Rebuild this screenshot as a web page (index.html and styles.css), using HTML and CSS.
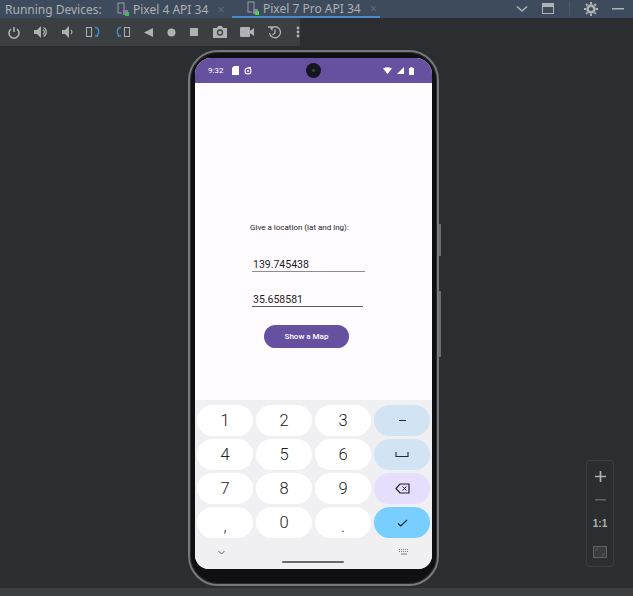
FILE: index.html
```html
<!DOCTYPE html>
<html lang="en-US">

<head>
    <meta charset="UTF-8">
    <meta name="viewport" content="width=device-width">
    <title>Running Devices</title>
    <link rel="stylesheet" href="styles.css">
</head>

<body>
    <div class="tabbar">
        <span class="tabbar-title">Running Devices:</span>
        <div class="tab tab-first">
            <svg width="13" height="14" viewBox="0 0 13 14"><rect x="1" y="1" width="6" height="10" fill="none" stroke="#9aa0a6"/><rect x="5" y="8" width="6" height="5" fill="#3d4b5c"/><rect x="6" y="8" width="5" height="5" fill="#9c6fb0"/><rect x="8" y="10" width="4" height="4" fill="#3fc04a"/></svg>
            <span>Pixel 4 API 34</span>
            <i class="tab-x">×</i>
        </div>
        <div class="tab tab-active">
            <svg width="13" height="14" viewBox="0 0 13 14"><rect x="1" y="1" width="6" height="10" fill="none" stroke="#9aa0a6"/><rect x="5" y="8" width="6" height="5" fill="#3d4b5c"/><rect x="6" y="8" width="5" height="5" fill="#9c6fb0"/><rect x="8" y="10" width="4" height="4" fill="#3fdc4a"/></svg>
            <span>Pixel 7 Pro API 34</span>
            <i class="tab-x">×</i>
        </div>
        <div class="tabbar-right">
            <svg width="12" height="8" viewBox="0 0 12 8"><path d="M1 1.5l5 4.5 5-4.5" fill="none" stroke="#afb1b3" stroke-width="1.5"/></svg>
            <svg width="13" height="12" viewBox="0 0 13 12"><rect x=".5" y=".5" width="11" height="10" fill="none" stroke="#afb1b3"/><rect x="1" y="1" width="10" height="3" fill="#afb1b3"/></svg>
            <b class="sep"></b>
            <svg width="14" height="14" viewBox="0 0 14 14"><circle cx="7" cy="7" r="3.4" fill="none" stroke="#afb1b3" stroke-width="2.6"/><path d="M7 0v14M0 7h14M2 2l10 10M12 2L2 12" stroke="#afb1b3" stroke-width="2" stroke-dasharray="2.2 9.6"/></svg>
            <svg width="12" height="4" viewBox="0 0 12 4"><rect y="1" width="12" height="1.5" fill="#afb1b3"/></svg>
        </div>
    </div>

    <div class="toolbar">
        <svg class="tool" width="12" height="13" viewBox="0 0 12 13"><path d="M3 3.2a5 5 0 1 0 6 0" fill="none" stroke="#afb1b3" stroke-width="1.6"/><path d="M6 1v5" stroke="#afb1b3" stroke-width="1.6"/></svg>
        <svg class="tool" width="14" height="12" viewBox="0 0 14 12"><path d="M0 4h3l4-4v12l-4-4H0z" fill="#afb1b3"/><path d="M9 3.500a3 3 0 0 1 0 5M9.500 1.500a5 5 0 0 1 0 9" fill="none" stroke="#afb1b3" stroke-width="1.200"/></svg>
        <svg class="tool" width="11" height="12" viewBox="0 0 11 12"><path d="M0 4h3l4-4v12l-4-4H0z" fill="#afb1b3"/><path d="M9 4a3 3 0 0 1 0 4" fill="none" stroke="#afb1b3" stroke-width="1.200"/></svg>
        <svg class="tool" width="15" height="12" viewBox="0 0 15 12"><rect x=".5" y="1.500" width="5" height="9" fill="none" stroke="#afb1b3"/><path d="M9 1.500c4 0 5 5 2 8.500M9 10l2.500.2.300-2.700" fill="none" stroke="#3d8fc9" stroke-width="1.400"/></svg>
        <svg class="tool" width="15" height="12" viewBox="0 0 15 12"><rect x="9.500" y="1.500" width="5" height="9" fill="none" stroke="#afb1b3"/><path d="M6 1.500C2 1.500 1 6.500 4 10M6 10l-2.500.2-.3-2.700" fill="none" stroke="#3d8fc9" stroke-width="1.400"/></svg>
        <svg class="tool" width="9" height="9" viewBox="0 0 9 9"><path d="M0 4.500L9 0v9z" fill="#afb1b3"/></svg>
        <svg class="tool" width="9" height="9" viewBox="0 0 9 9"><circle cx="4.500" cy="4.500" r="4" fill="#afb1b3"/></svg>
        <svg class="tool" width="9" height="9" viewBox="0 0 9 9"><rect width="8" height="8" fill="#afb1b3"/></svg>
        <svg class="tool" width="14" height="12" viewBox="0 0 14 12"><path d="M0 2h4l1-2h4l1 2h4v10H0z" fill="#afb1b3"/><circle cx="7" cy="6.500" r="2.500" fill="none" stroke="#3c3f41" stroke-width="1.300"/></svg>
        <svg class="tool" width="14" height="10" viewBox="0 0 14 10"><rect width="10" height="10" rx="1" fill="#afb1b3"/><path d="M10 4l4-3v8l-4-3z" fill="#afb1b3"/></svg>
        <svg class="tool" width="14" height="13" viewBox="0 0 14 13"><path d="M2.500 3a5.500 5.500 0 1 1-1 4" fill="none" stroke="#afb1b3" stroke-width="1.300"/><path d="M0 1h4v3.500" fill="none" stroke="#afb1b3" stroke-width="1.300"/><path d="M7 3.500v3.500l-2.500 2" fill="none" stroke="#afb1b3" stroke-width="1.300"/></svg>
        <svg class="tool" width="4" height="12" viewBox="0 0 4 12"><circle cx="2" cy="2" r="1.400" fill="#afb1b3"/><circle cx="2" cy="6" r="1.400" fill="#afb1b3"/><circle cx="2" cy="10" r="1.400" fill="#afb1b3"/></svg>
    </div>

    <div class="stage">
        <div class="phone">
            <span class="side-btn side-btn-top"></span>
            <span class="side-btn side-btn-low"></span>
            <div class="screen">
                <div class="statusbar">
                    <span class="clock">9:32</span>
                    <svg width="7" height="9" viewBox="0 0 7 9"><path d="M2 0h5v9H0V2z" fill="#fff"/></svg>
                    <svg width="8" height="8" viewBox="0 0 8 8"><circle cx="4" cy="4" r="3" fill="none" stroke="#fff" stroke-width="1.100"/><circle cx="4" cy="4" r="1" fill="#fff"/><path d="M3 0h4v2z" fill="#fff"/></svg>
                    <span class="status-gap"></span>
                    <svg width="9" height="7" viewBox="0 0 9 7"><path d="M0 1.500Q4.500-1 9 1.500L4.500 7z" fill="#fff"/></svg>
                    <svg width="7" height="7" viewBox="0 0 7 7"><path d="M7 0v7H0z" fill="#fff"/></svg>
                    <svg class="batt" width="5" height="8" viewBox="0 0 5 8"><path d="M1.500 0h2v1H5v7H0V1h1.500z" fill="#fff"/></svg>
                    <div class="camera"><i></i></div>
                </div>

                <div class="app">
                    <p class="prompt">Give a location (lat and lng):</p>
                    <div class="field field-lat">139.745438</div>
                    <div class="field field-lng">35.658581</div>
                    <div class="map-btn">Show a Map</div>
                </div>

                <div class="keyboard">
                    <div class="keys">
                        <div class="key">1</div>
                        <div class="key">2</div>
                        <div class="key">3</div>
                        <div class="key key-blue"><b class="dash"></b></div>
                        <div class="key">4</div>
                        <div class="key">5</div>
                        <div class="key">6</div>
                        <div class="key key-blue">
                            <svg width="14" height="6" viewBox="0 0 14 6"><path d="M1 0v4.500h12V0" fill="none" stroke="#1f2a33" stroke-width="1.100"/></svg>
                        </div>
                        <div class="key">7</div>
                        <div class="key">8</div>
                        <div class="key">9</div>
                        <div class="key key-purple">
                            <svg width="15" height="11" viewBox="0 0 15 11"><path d="M5 1h9v9H5L1 5.500z" fill="none" stroke="#1f1d29" stroke-width="1.200"/><path d="M7.500 3.500l4 4M11.500 3.500l-4 4" stroke="#1f1d29"/></svg>
                        </div>
                        <div class="key key-low">,</div>
                        <div class="key">0</div>
                        <div class="key key-low">.</div>
                        <div class="key key-go">
                            <svg width="11" height="8" viewBox="0 0 11 8"><path d="M1 4.500L3.800 7 10 1" fill="none" stroke="#10202a" stroke-width="1.100"/></svg>
                        </div>
                    </div>
                    <div class="kb-foot">
                        <svg width="7" height="5" viewBox="0 0 7 5"><path d="M.5 1l3 3 3-3" fill="none" stroke="#5f6065"/></svg>
                        <svg width="10" height="6" viewBox="0 0 10 6"><path d="M0 .5h10M0 2.500h10" stroke="#77787c" stroke-dasharray="1 1"/><path d="M2 5h6" stroke="#77787c"/></svg>
                    </div>
                    <div class="home-bar"></div>
                </div>
            </div>
        </div>

        <div class="zoom-panel">
            <svg width="11" height="11" viewBox="0 0 11 11"><path d="M5.500 0v11M0 5.500h11" stroke="#afb1b3" stroke-width="1.700"/></svg>
            <svg width="11" height="2" viewBox="0 0 11 2"><rect width="11" height="1.600" fill="#5f6163"/></svg>
            <span class="zoom-one">1:1</span>
            <svg width="14" height="12" viewBox="0 0 14 12"><rect x=".5" y=".5" width="13" height="11" fill="#3a3b3d" stroke="#5f6163"/><path d="M3 5V3h2M9 9h2V7" fill="none" stroke="#5f6163"/></svg>
        </div>
    </div>

    <div class="bottombar"></div>
</body>

</html>
```

FILE: styles.css
```css
html, body {
    margin: 0;
    height: 596px;
    overflow: hidden;
}

body {
    display: flex;
    flex-direction: column;
    background-color: #2b2d30;
    font-family: "Noto Sans", sans-serif;
}

.tabbar {
    display: flex;
    align-items: center;
    height: 18px;
    flex: none;
    background-color: #3d4b5c;
    color: #afb1b3;
    font-size: 12px;
    padding-left: 5px;
}

.tabbar-title {
    width: 112px;
    white-space: nowrap;
}

.tab {
    display: flex;
    align-items: center;
    gap: 3px;
    height: 18px;
    box-sizing: border-box;
    white-space: nowrap;
}

.tab-first {
    width: 115px;
}

.tab-active {
    width: 148px;
    padding-left: 15px;
    border-bottom: 2px solid #4a88c7;
}

.tab-x {
    margin-left: 6px;
    color: #636a70;
    font-style: normal;
    font-size: 13px;
}

.tabbar-right {
    display: flex;
    align-items: center;
    gap: 14px;
    margin-left: auto;
    padding-right: 9px;
}

.sep {
    width: 1px;
    height: 14px;
    background-color: #50596a;
}

.toolbar {
    display: flex;
    align-items: center;
    justify-content: space-between;
    width: 292px;
    height: 28px;
    flex: none;
    padding-left: 8px;
}

.toolbar {
    box-shadow: 633px 0 0 0 #3c3f41;
    background-color: #3c3f41;
}

.stage {
    position: relative;
    flex: 1;
    padding: 4px 0 0 188px;
}

.phone {
    position: relative;
    box-sizing: border-box;
    width: 251px;
    height: 536px;
    padding: 8px 7px 13px;
    background-color: #101012;
    border: 2px solid #77797c;
    border-radius: 30px;
    box-shadow: inset 0 0 0 1px #2c2c2e;
    box-sizing: border-box;
}

.side-btn {
    position: absolute;
    right: -4px;
    width: 2px;
    background-color: #6c6e70;
}

.side-btn-top {
    top: 172px;
    height: 32px;
}

.side-btn-low {
    top: 239px;
    height: 66px;
}

.screen {
    display: flex;
    flex-direction: column;
    height: 100%;
    margin: -2px -2px -2px;
    background-color: #fffbfe;
    border-radius: 16px 16px 14px 14px;
    overflow: hidden;
}

.statusbar {
    position: relative;
    display: flex;
    align-items: center;
    gap: 6px;
    height: 25px;
    flex: none;
    padding: 0 18px 0 13px;
    background-color: #65519f;
    color: #fff;
}

.clock {
    font-family: Roboto, sans-serif;
    font-size: 8px;
    margin-right: 3px;
}

.status-gap {
    flex: 1;
}

.statusbar svg + svg {
    margin-left: -1px;
}

.batt {
    margin-left: 2px;
}

.camera {
    position: absolute;
    left: 111px;
    top: 5px;
    width: 15px;
    height: 15px;
    border-radius: 50%;
    background-color: #17151d;
    display: flex;
    align-items: center;
    justify-content: center;
}

.camera i {
    width: 3px;
    height: 3px;
    border-radius: 50%;
    background-color: #2b4a5e;
}

.app {
    flex: 1;
    font-family: Roboto, sans-serif;
    color: #1c1b1f;
}

.prompt {
    margin: 140px 0 0 55px;
    font-size: 8px;
    line-height: 9px;
    white-space: nowrap;
}

.field {
    margin-left: 57px;
    font-size: 10.5px;
    line-height: 12px;
    padding-left: 1px;
    box-sizing: border-box;
}

.field-lat {
    width: 113px;
    margin-top: 27px;
    border-bottom: 1px solid #8f8b96;
}

.field-lng {
    width: 111px;
    margin-top: 22px;
    border-bottom: 1px solid #5c5a62;
}

.map-btn {
    display: flex;
    align-items: center;
    justify-content: center;
    width: 85px;
    height: 23px;
    margin: 18px 0 0 69px;
    border-radius: 12px;
    background-color: #65519f;
    color: #fff;
    font-size: 8px;
    font-weight: 500;
}

.keyboard {
    position: relative;
    flex: none;
    height: 169px;
    box-sizing: border-box;
    padding: 5px 3px 0 2px;
    background-color: #f0eff2;
}

.keys {
    display: grid;
    grid-template-columns: repeat(4, 56px);
    grid-auto-rows: 31px;
    gap: 3px 3px;
    font-family: Roboto, sans-serif;
    font-size: 16.500px;
    font-weight: 300;
    color: #202124;
}

.key {
    display: flex;
    align-items: center;
    justify-content: center;
    border-radius: 16px;
    background-color: #fff;
}

.key-low {
    padding-top: 8px;
    box-sizing: border-box;
}

.key-blue {
    background-color: #d2e3f3;
}

.key-purple {
    background-color: #e5defc;
}

.key-go {
    background-color: #78cefe;
}

.dash {
    width: 7px;
    height: 1.500px;
    background-color: #1f2a33;
}

.kb-foot {
    display: flex;
    justify-content: space-between;
    align-items: center;
    padding: 11px 20px 0 21px;
}

.home-bar {
    position: absolute;
    left: 87px;
    bottom: 6px;
    width: 62px;
    height: 2px;
    border-radius: 1px;
    background-color: #6a6a6e;
}

.zoom-panel {
    position: absolute;
    left: 586px;
    top: 414px;
    box-sizing: border-box;
    width: 28px;
    height: 107px;
    display: flex;
    flex-direction: column;
    align-items: center;
    justify-content: space-between;
    padding: 10px 0 8px;
    border: 1px solid #3c3f41;
    border-radius: 4px;
    background-color: #2b2d30;
}

.zoom-one {
    color: #afb1b3;
    font-family: "Liberation Sans", sans-serif;
    font-size: 10px;
    font-weight: 700;
    line-height: 11px;
}

.bottombar {
    height: 8px;
    flex: none;
    background-color: #3c3f41;
}
```
